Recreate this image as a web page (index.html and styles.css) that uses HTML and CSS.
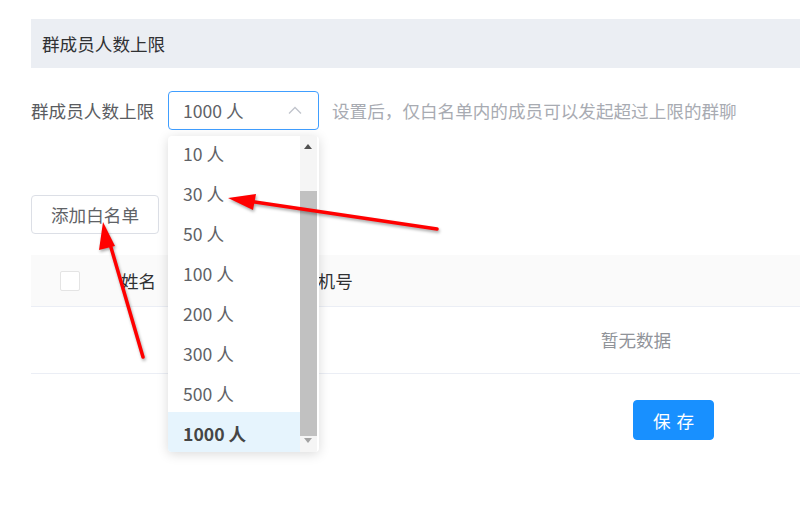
FILE: index.html
```html
<!DOCTYPE html>
<html lang="zh-CN">
<head>
    <meta charset="UTF-8">
    <meta name="viewport" content="width=device-width, initial-scale=1.0">
    <title>群成员人数上限</title>
    <link rel="stylesheet" href="styles.css">
</head>
<body>
    <div class="page">
        <div class="section-title">群成员人数上限</div>

        <div class="form-row">
            <label class="form-label">群成员人数上限</label>
            <div class="select-wrap">
                <div class="select">
                    <span class="select-value">1000 人</span>
                    <svg class="select-arrow" width="14" height="8" viewBox="0 0 14 8">
                        <path d="M1 7.5 L7 1.5 L13 7.5" fill="none" stroke="#c0c4cc" stroke-width="1.3"/>
                    </svg>
                </div>
                <div class="dropdown">
                    <ul class="dropdown-list">
                        <li class="dropdown-item">10 人</li>
                        <li class="dropdown-item">30 人</li>
                        <li class="dropdown-item">50 人</li>
                        <li class="dropdown-item">100 人</li>
                        <li class="dropdown-item">200 人</li>
                        <li class="dropdown-item">300 人</li>
                        <li class="dropdown-item">500 人</li>
                        <li class="dropdown-item selected">1000 人</li>
                    </ul>
                    <div class="scrollbar">
                        <span class="scroll-up"></span>
                        <div class="scroll-thumb"></div>
                        <span class="scroll-down"></span>
                    </div>
                </div>
            </div>
            <span class="form-hint">设置后，仅白名单内的成员可以发起超过上限的群聊</span>
        </div>

        <div class="actions">
            <button class="btn">添加白名单</button>
        </div>

        <div class="table">
            <div class="table-head">
                <div class="cell cell-check"><span class="checkbox"></span></div>
                <div class="cell cell-name">姓名</div>
                <div class="cell cell-phone">手机号</div>
            </div>
            <div class="table-empty">暂无数据</div>
        </div>

        <div class="footer">
            <button class="btn btn-primary">保 存</button>
        </div>
    </div>

    <!-- annotation arrows -->
    <svg class="annotations" width="800" height="531" viewBox="0 0 800 531">
        <g class="arrow">
            <line x1="437" y1="229" x2="248" y2="201" stroke="#f00" stroke-width="3.5" stroke-linecap="round"/>
            <polygon points="228,198 256,194 253,210" fill="#f00"/>
        </g>
        <g class="arrow">
            <line x1="143" y1="357" x2="110" y2="244" stroke="#f00" stroke-width="3.5" stroke-linecap="round"/>
            <polygon points="103,222 99,250 115,246" fill="#f00"/>
        </g>
    </svg>
</body>
</html>
```

FILE: styles.css
```css
html,
body {
    height: 100%;
}

body {
    margin: 0;
    padding: 0;
    overflow: hidden;
    background-color: #fff;
    font-family: "Noto Sans CJK SC", "Noto Sans", sans-serif;
    font-size: 17.6px;
    color: #303133;
}

.page {
    width: 1210px;
    padding: 19px 0 0 31px;
}

.section-title {
    height: 49px;
    line-height: 49px;
    padding-left: 11px;
    background-color: #ebeef3;
    color: #303133;
}

.form-row {
    display: flex;
    align-items: center;
    margin-top: 23px;
    height: 39px;
}

.form-label {
    width: 137px;
    color: #5a5c61;
}

.select-wrap {
    position: relative;
}

.select {
    box-sizing: border-box;
    width: 151px;
    height: 39px;
    padding: 0 16px 0 14px;
    border: 1px solid #409eff;
    border-radius: 4px;
    display: flex;
    align-items: center;
    justify-content: space-between;
    color: #606266;
}

.select-arrow {
    display: block;
    margin-top: -1px;
}

.form-hint {
    margin-left: 13px;
    color: #a8abb2;
}

/* Dropdown */
.dropdown {
    position: absolute;
    top: 45px;
    left: 0;
    width: 151px;
    height: 316px;
    background-color: #fff;
    border-radius: 4px;
    box-shadow: 0 2px 12px rgba(0, 0, 0, 0.15);
    overflow: hidden;
    z-index: 10;
    display: flex;
}

.dropdown-list {
    list-style: none;
    margin: -4px 0 0 0;
    padding: 0;
    width: 132px;
}

.dropdown-item {
    height: 40px;
    line-height: 44px;
    padding-left: 15px;
    color: #606266;
}

.dropdown-item.selected {
    background-color: #e6f4fd;
    color: #454545;
    font-weight: 600;
}

.scrollbar {
    position: relative;
    width: 17px;
    height: 100%;
    background-color: #f5f5f5;
}

.scroll-up,
.scroll-down {
    position: absolute;
    left: 4px;
    width: 0;
    height: 0;
    border-left: 4.5px solid transparent;
    border-right: 4.5px solid transparent;
}

.scroll-up {
    top: 8px;
    border-bottom: 5px solid #505050;
}

.scroll-down {
    top: 302px;
    border-top: 5px solid #a3a3a3;
}

.scroll-thumb {
    position: absolute;
    top: 55px;
    left: 0;
    width: 17px;
    height: 245px;
    background-color: #c1c1c1;
}

/* Buttons */
.actions {
    margin-top: 65px;
}

.btn {
    box-sizing: border-box;
    height: 39px;
    padding: 0 19px;
    border: 1px solid #dcdfe6;
    border-radius: 4px;
    background-color: #fff;
    color: #606266;
    font-family: inherit;
    font-size: 17.6px;
    cursor: pointer;
}

.btn-primary {
    width: 81px;
    height: 40px;
    padding: 0;
    border-color: #1890ff;
    background-color: #1890ff;
    color: #fff;
    letter-spacing: 1px;
    text-indent: 1px;
}

/* Table */
.table {
    margin-top: 21px;
}

.table-head {
    display: flex;
    align-items: center;
    height: 51px;
    background-color: #fafafa;
    border-bottom: 1px solid #ebeef5;
    color: #303133;
}

.cell-check {
    width: 90px;
    padding-left: 29px;
    box-sizing: border-box;
}

.checkbox {
    display: block;
    box-sizing: border-box;
    width: 20px;
    height: 20px;
    border: 1.5px solid #e4e4e4;
    border-radius: 2px;
    background-color: #fff;
}

.cell-name {
    width: 179px;
}

.table-empty {
    height: 66px;
    line-height: 66px;
    text-align: center;
    color: #909399;
    border-bottom: 1px solid #ebeef5;
}

.footer {
    margin-top: 26px;
    padding-left: 602px;
}

/* Annotation overlay */
.annotations {
    position: absolute;
    top: 0;
    left: 0;
    pointer-events: none;
    z-index: 20;
}

.arrow {
    filter: drop-shadow(1px 2px 1.5px rgba(0, 0, 0, 0.35));
}
```
